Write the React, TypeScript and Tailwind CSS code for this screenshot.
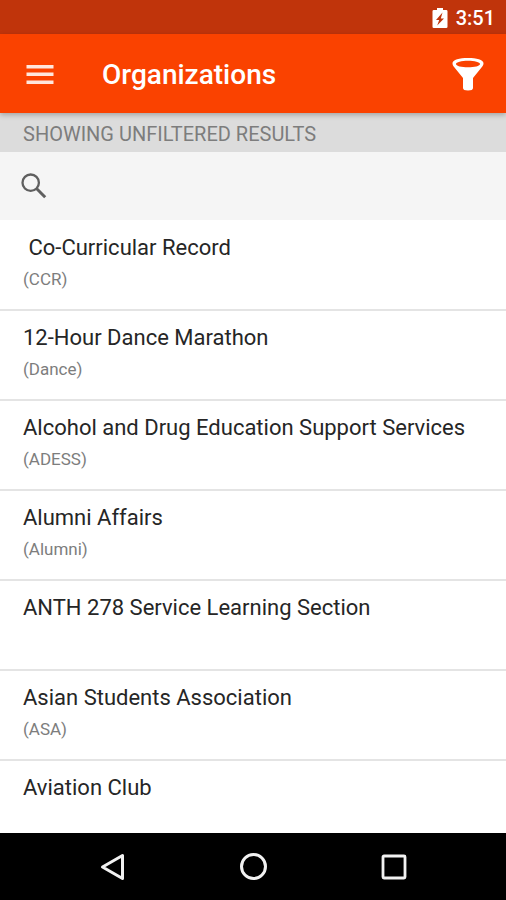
import { useState } from 'react';

type Organization = {
  name: string;
  short?: string;
};

const organizations: Organization[] = [
  { name: ' Co-Curricular Record', short: 'CCR' },
  { name: '12-Hour Dance Marathon', short: 'Dance' },
  { name: 'Alcohol and Drug Education Support Services', short: 'ADESS' },
  { name: 'Alumni Affairs', short: 'Alumni' },
  { name: 'ANTH 278 Service Learning Section' },
  { name: 'Asian Students Association', short: 'ASA' },
  { name: 'Aviation Club' },
];

function StatusBar() {
  return (
    <div className="flex h-[34px] shrink-0 items-center justify-end gap-2 bg-[#c0340b] pt-0.5 pr-[11px] text-white">
      <svg className="h-[21px] w-4" viewBox="0 0 16 21" aria-hidden="true">
        <path
          fill="currentColor"
          fillRule="evenodd"
          d="M5 0h6v2h3.200q1.300 0 1.300 1.300v15.400q0 1.300-1.300 1.300H1.800Q.5 20 .5 18.700V3.300Q.5 2 1.800 2H5zM10.500 4.500 4 12h3.200L5.200 17.500 12 10.500H8.800z"
        />
      </svg>
      <span className="text-xl leading-6 font-medium">3:51</span>
    </div>
  );
}

function Toolbar() {
  return (
    <header className="relative z-10 flex h-[79px] shrink-0 items-center bg-[#fa4200] pt-0.5 pr-[22px] pl-[26px] text-white shadow-[0_2px_5px_rgba(0,0,0,0.25)]">
      <button type="button" aria-label="Open menu">
        <svg className="h-5 w-7" viewBox="0 0 28 20" aria-hidden="true">
          <path fill="#ffe6dc" d="M.5 0h27v3.500H.5zM.5 7.500h27V11H.5zM.5 15.500h27V19H.5z" />
        </svg>
      </button>
      <h1 className="ml-12 flex-1 text-[28px] leading-8 font-medium">Organizations</h1>
      <button type="button" aria-label="Filter organizations">
        <svg className="h-[34px] w-8" viewBox="0 0 32 34" aria-hidden="true">
          <path
            fill="currentColor"
            fillRule="evenodd"
            d="M16 0c8.500 0 15.500 1.800 15.500 5.300 0 1.800-.8 3-2 4.200L21 20v10q0 2.500-5 2.500T11 30V20L2.500 9.500C1.300 8.300.5 7.100.5 5.300.5 1.800 7.500 0 16 0zM16 2.700C9.500 2.700 4 4 4 6s5.500 3.300 12 3.300S28 8 28 6 22.500 2.700 16 2.700z"
          />
        </svg>
      </button>
    </header>
  );
}

function NavigationBar() {
  return (
    <nav className="flex h-[67px] shrink-0 items-center justify-center gap-28 bg-black text-[#f2f2f2]">
      <button type="button" aria-label="Back">
        <svg className="h-7 w-7" viewBox="0 0 28 28" fill="none" stroke="currentColor" strokeWidth="3" aria-hidden="true">
          <path strokeLinejoin="round" d="M23.500 2.500v23L3.500 14z" />
        </svg>
      </button>
      <button type="button" aria-label="Home">
        <svg className="h-7 w-7" viewBox="0 0 28 28" fill="none" stroke="currentColor" strokeWidth="3" aria-hidden="true">
          <circle cx="14.500" cy="13.500" r="12" />
        </svg>
      </button>
      <button type="button" aria-label="Recent apps">
        <svg className="h-7 w-7" viewBox="0 0 28 28" fill="none" stroke="currentColor" strokeWidth="2.800" aria-hidden="true">
          <rect x="4" y="3" width="22" height="22" rx="1" />
        </svg>
      </button>
    </nav>
  );
}

export default function App() {
  const [query, setQuery] = useState('');

  const results = organizations.filter(({ name, short = '' }) =>
    `${name} ${short}`.toLowerCase().includes(query.trim().toLowerCase())
  );

  return (
    <div className="flex h-screen flex-col bg-white font-[Roboto,sans-serif]">
      <StatusBar />
      <Toolbar />

      <p className="flex h-[39px] shrink-0 items-center bg-[#dcdcdc] px-[23px] pt-0.5 text-xl leading-6 text-[#7d7d7d]">
        SHOWING UNFILTERED RESULTS
      </p>

      {/* Search */}
      <div className="flex h-[68px] shrink-0 items-center gap-4 bg-[#f5f5f5] px-[21px]">
        <label htmlFor="search" aria-label="Search organizations">
          <svg className="h-[26px] w-[26px]" viewBox="0 0 26 26" fill="none" stroke="#5f5f5f" aria-hidden="true">
            <circle cx="9.700" cy="9.700" r="8.200" strokeWidth="2.300" />
            <path strokeWidth="3" d="m15.500 15.500 8.700 8.700" />
          </svg>
        </label>
        <input
          id="search"
          type="text"
          value={query}
          onChange={(e) => setQuery(e.target.value)}
          className="h-10 min-w-0 flex-1 bg-transparent text-[22px] text-[#262626] outline-none"
        />
      </div>

      {/* Results */}
      <main className="min-h-0 flex-1 overflow-y-auto pt-px [scrollbar-width:none]">
        <ul>
          {results.map(({ name, short }) => (
            <li key={name} className="h-[90px] border-b-2 border-[#e4e4e4] px-[23px] pt-[13px]">
              <h2 className="text-[22px] leading-7 whitespace-pre text-[#262626]">{name}</h2>
              {short && <p className="mt-[7px] text-[17px] leading-5 text-[#7d7d7d]">({short})</p>}
            </li>
          ))}
        </ul>
      </main>

      <NavigationBar />
    </div>
  );
}
